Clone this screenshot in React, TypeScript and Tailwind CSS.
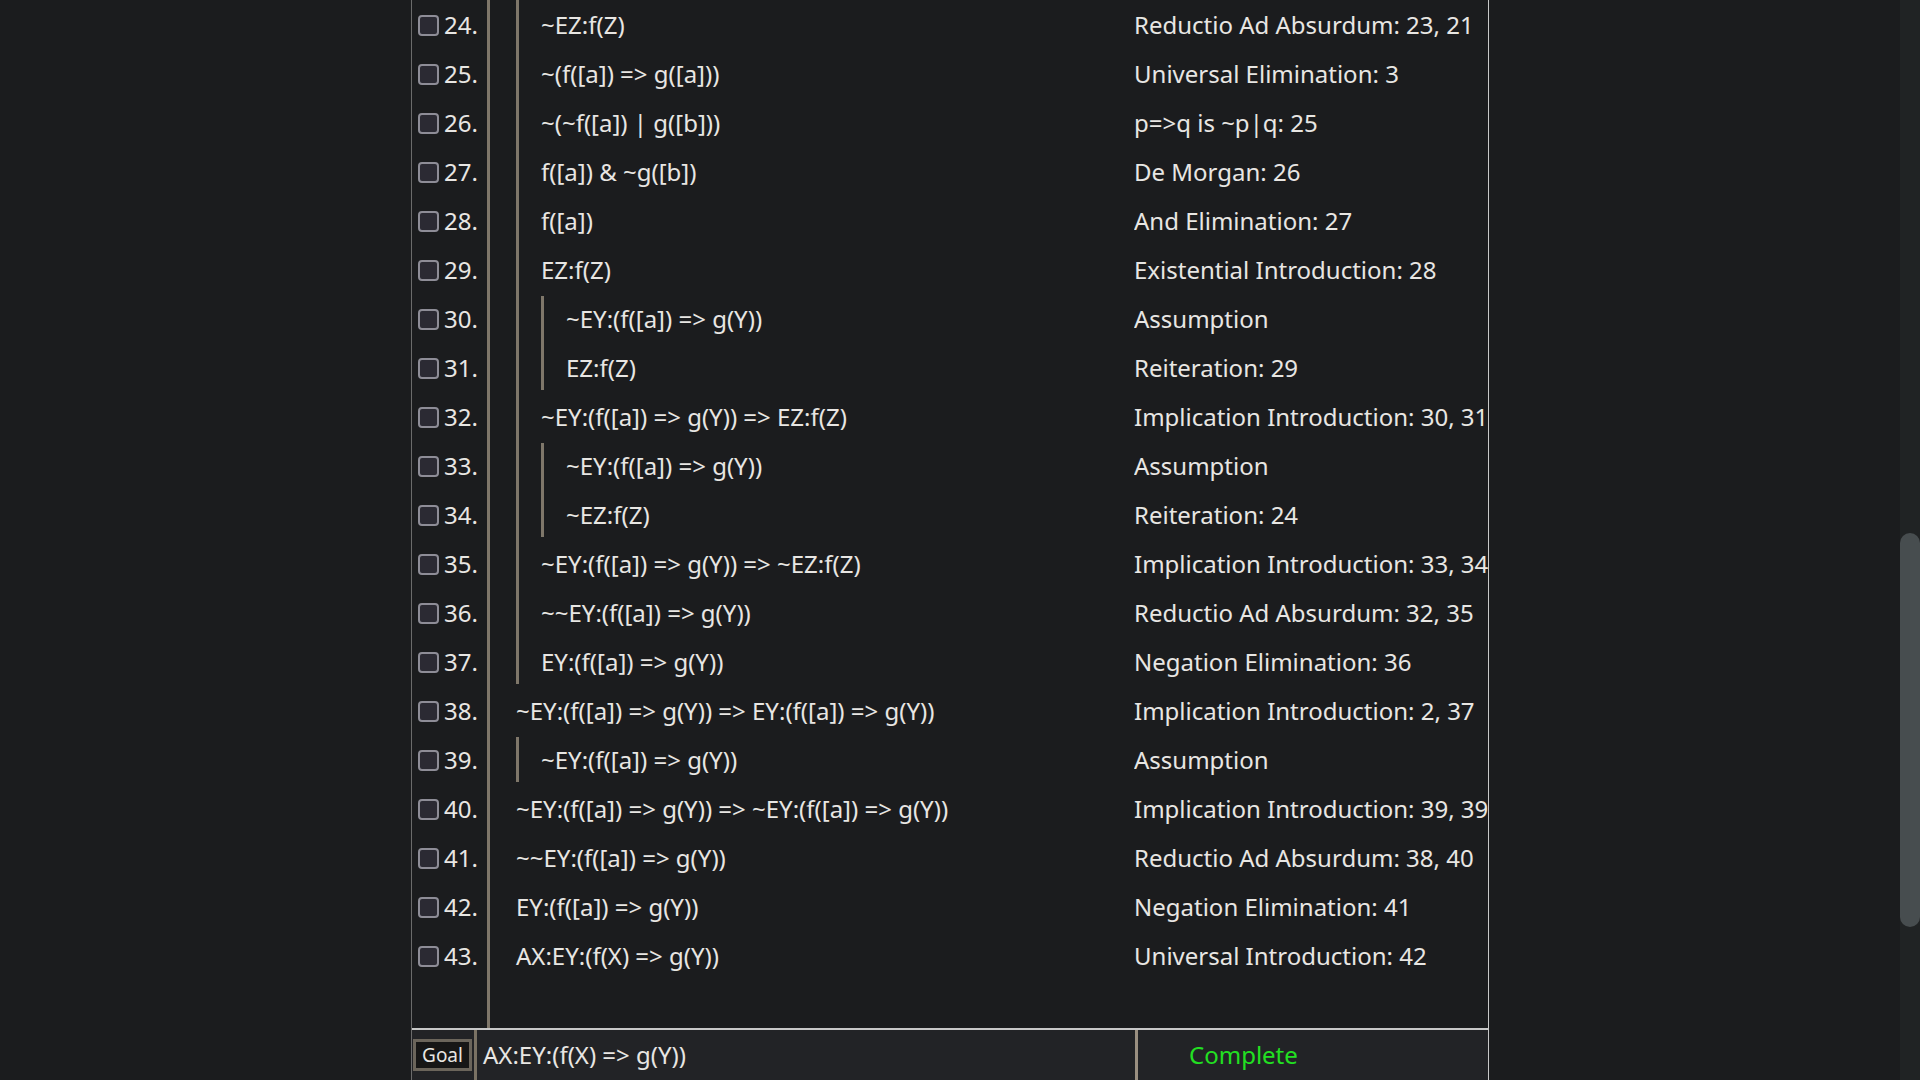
import React from "react";

type Row = {
  n: number;
  f: string;
  j: string;
  bars: { start?: boolean; end?: boolean }[];
};

const rows: Row[] = [
  { n: 24, f: "~EZ:f(Z)", j: "Reductio Ad Absurdum: 23, 21", bars: [{}] },
  { n: 25, f: "~(f([a]) => g([a]))", j: "Universal Elimination: 3", bars: [{}] },
  { n: 26, f: "~(~f([a]) | g([b]))", j: "p=>q is ~p|q: 25", bars: [{}] },
  { n: 27, f: "f([a]) & ~g([b])", j: "De Morgan: 26", bars: [{}] },
  { n: 28, f: "f([a])", j: "And Elimination: 27", bars: [{}] },
  { n: 29, f: "EZ:f(Z)", j: "Existential Introduction: 28", bars: [{}] },
  { n: 30, f: "~EY:(f([a]) => g(Y))", j: "Assumption", bars: [{}, { start: true }] },
  { n: 31, f: "EZ:f(Z)", j: "Reiteration: 29", bars: [{}, { end: true }] },
  { n: 32, f: "~EY:(f([a]) => g(Y)) => EZ:f(Z)", j: "Implication Introduction: 30, 31", bars: [{}] },
  { n: 33, f: "~EY:(f([a]) => g(Y))", j: "Assumption", bars: [{}, { start: true }] },
  { n: 34, f: "~EZ:f(Z)", j: "Reiteration: 24", bars: [{}, { end: true }] },
  { n: 35, f: "~EY:(f([a]) => g(Y)) => ~EZ:f(Z)", j: "Implication Introduction: 33, 34", bars: [{}] },
  { n: 36, f: "~~EY:(f([a]) => g(Y))", j: "Reductio Ad Absurdum: 32, 35", bars: [{}] },
  { n: 37, f: "EY:(f([a]) => g(Y))", j: "Negation Elimination: 36", bars: [{ end: true }] },
  { n: 38, f: "~EY:(f([a]) => g(Y)) => EY:(f([a]) => g(Y))", j: "Implication Introduction: 2, 37", bars: [] },
  { n: 39, f: "~EY:(f([a]) => g(Y))", j: "Assumption", bars: [{ start: true, end: true }] },
  { n: 40, f: "~EY:(f([a]) => g(Y)) => ~EY:(f([a]) => g(Y))", j: "Implication Introduction: 39, 39", bars: [] },
  { n: 41, f: "~~EY:(f([a]) => g(Y))", j: "Reductio Ad Absurdum: 38, 40", bars: [] },
  { n: 42, f: "EY:(f([a]) => g(Y))", j: "Negation Elimination: 41", bars: [] },
  { n: 43, f: "AX:EY:(f(X) => g(Y))", j: "Universal Introduction: 42", bars: [] },
];

function Formula({ bars, text }: { bars: Row["bars"]; text: string }) {
  let content: React.ReactNode = (
    <div className="flex h-full items-center whitespace-nowrap">{text}</div>
  );
  for (let i = bars.length - 1; i >= 0; i--) {
    const b = bars[i];
    content = (
      <div className="flex h-full">
        <div
          className={
            "w-[3px] shrink-0 bg-[#7f776a] " +
            (b.start ? "mt-[2px] " : "") +
            (b.end ? "mb-[2px]" : "")
          }
        />
        <div className="h-full pl-[22px]">{content}</div>
      </div>
    );
  }
  return <div className="h-full pl-[26px]">{content}</div>;
}

export default function App() {
  return (
    <div
      className="flex h-screen w-full overflow-hidden bg-[#1b1c1e] text-[#e8e6e3]"
      style={{ fontFamily: '"Noto Sans", "Open Sans", sans-serif' }}
    >
      <div className="flex flex-1 justify-center">
        <div className="flex h-full w-[1078px] flex-col border-l border-r border-l-[#6b6b6b] border-r-[#c8c8c8] bg-[#1b1c1e] text-[24px]">
          <div className="flex flex-1 flex-col">
            {rows.map((r) => (
              <div key={r.n} className="flex h-[49px]">
                <div className="flex w-[78px] shrink-0 items-center border-r-[3px] border-[#7f776a] pl-[6px]">
                  <div className="mt-[1px] h-[21px] w-[21px] shrink-0 rounded-[4px] border-[2.5px] border-[#8e8d97] bg-[#2b2a33]" />
                  <span className="ml-[5px] leading-none">{r.n}.</span>
                </div>
                <div className="w-[644px] shrink-0 overflow-hidden">
                  <Formula bars={r.bars} text={r.f} />
                </div>
                <div className="flex min-w-0 flex-1 items-center overflow-hidden whitespace-nowrap">
                  {r.j}
                </div>
              </div>
            ))}
            <div className="flex flex-1">
              <div className="w-[78px] shrink-0 border-r-[3px] border-[#7f776a]" />
            </div>
          </div>
          <div className="flex h-[52px] shrink-0 border-t-2 border-[#c8c8c8] bg-[#222326]">
            <div className="flex w-[723px] shrink-0 items-center">
              <div className="ml-[1px] flex h-[32px] w-[59px] shrink-0 items-center justify-center border-[3px] border-[#6b655b] bg-[#161616] text-[19px]">
                Goal
              </div>
              <div className="ml-[2px] h-full w-[3px] shrink-0 bg-[#7a7264]" />
              <span className="ml-[6px] whitespace-nowrap">AX:EY:(f(X) =&gt; g(Y))</span>
            </div>
            <div className="h-full w-[3px] shrink-0 bg-[#9a8f80]" />
            <div className="flex flex-1 items-center pl-[51px] text-[#22e022]">Complete</div>
          </div>
        </div>
      </div>
      <div className="flex h-full w-[20px] flex-col bg-[#202324]">
        <div className="h-[533px]" />
        <div className="h-[394px] w-[20px] rounded-full bg-[#474d4f]" />
      </div>
    </div>
  );
}
